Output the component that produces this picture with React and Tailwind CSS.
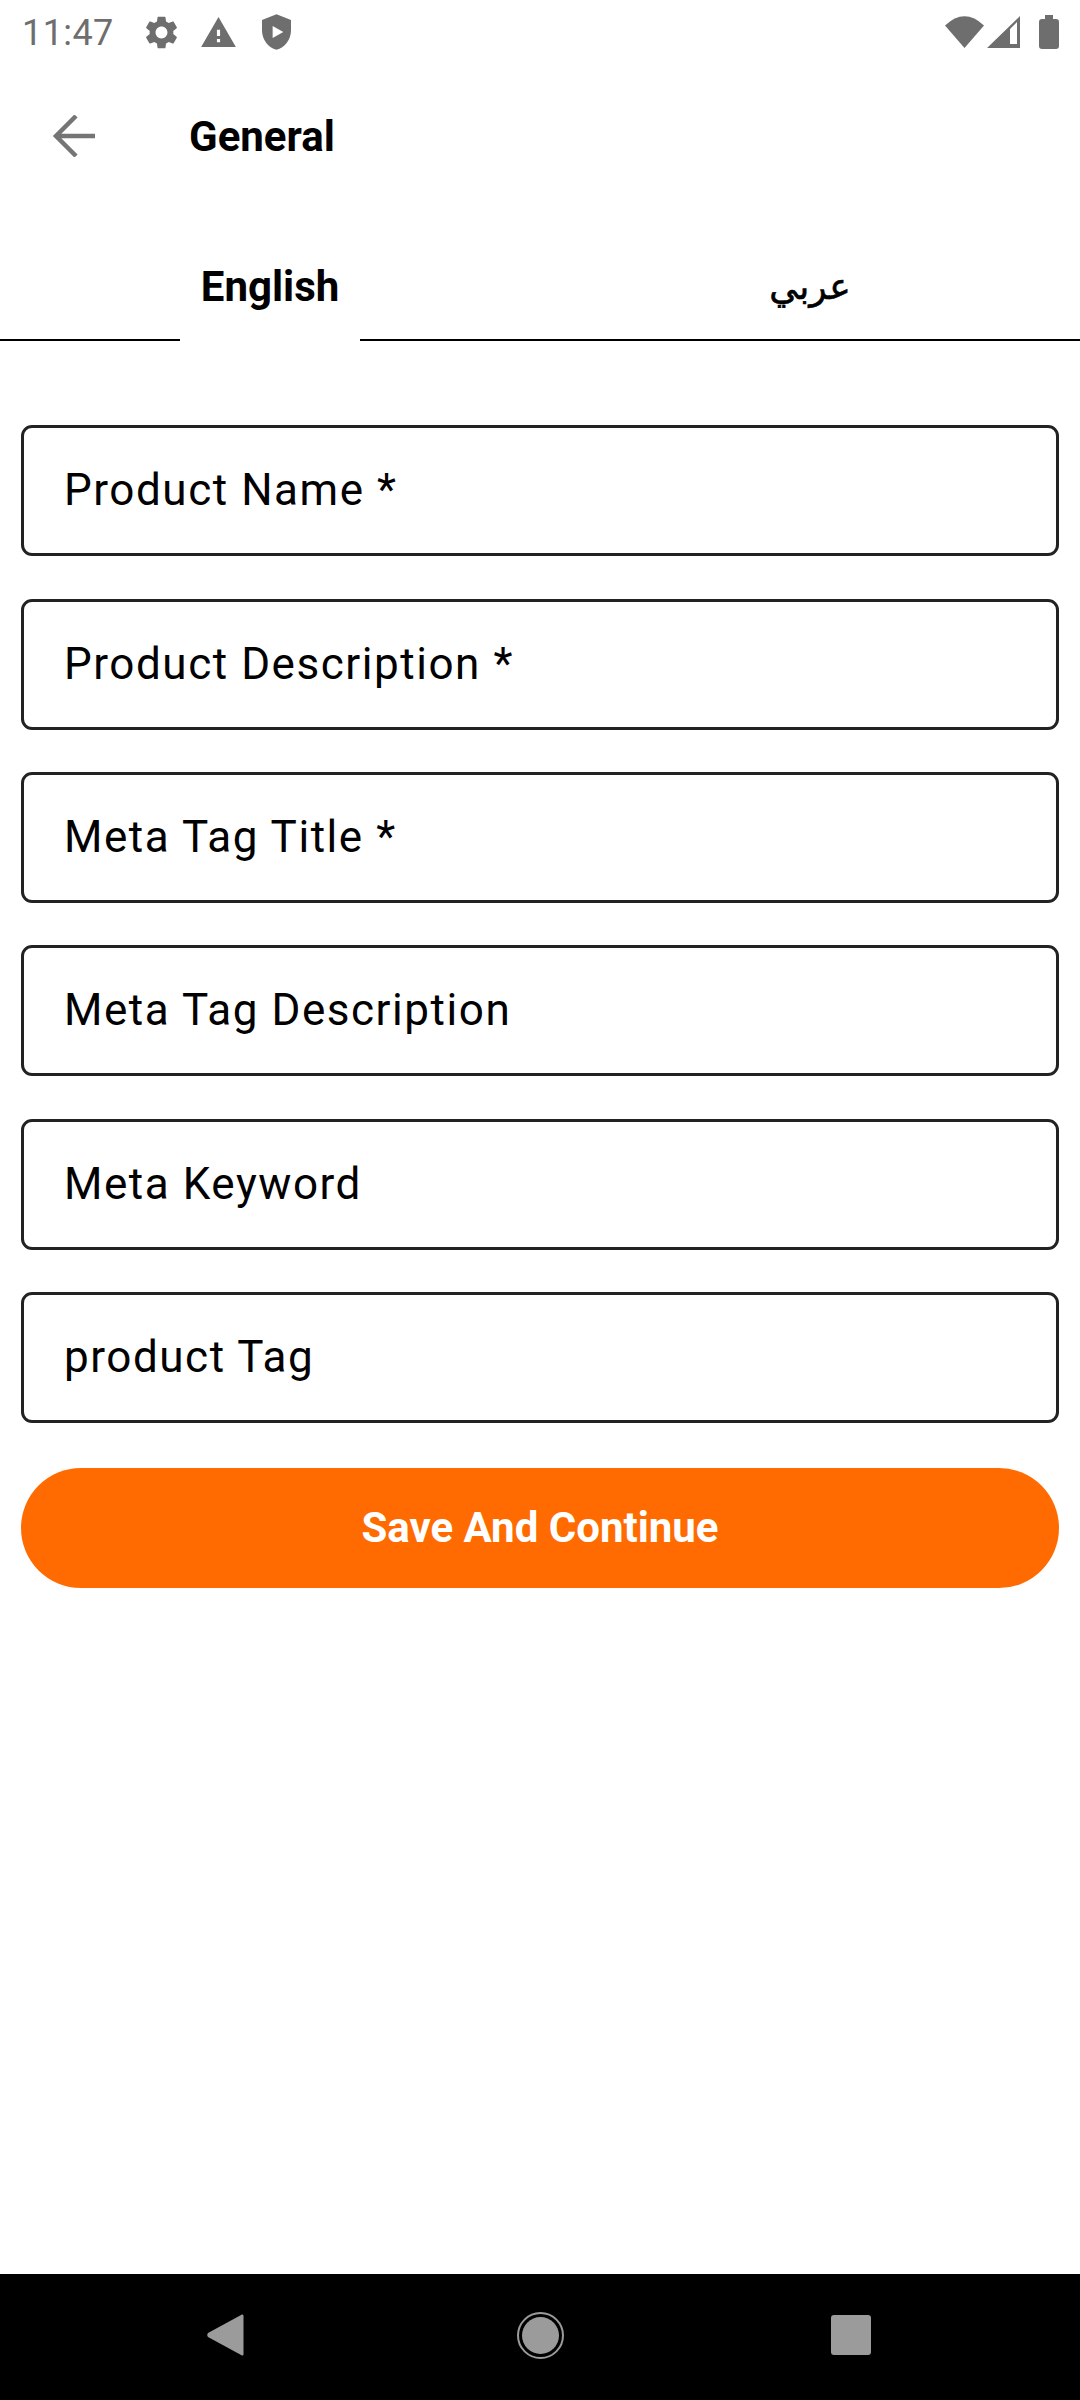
const fields = [
  "Product Name *",
  "Product Description *",
  "Meta Tag Title *",
  "Meta Tag Description",
  "Meta Keyword",
  "product Tag",
];

function StatusBar() {
  return (
    <div className="flex h-[64px] items-center justify-between pl-[22px] pr-[21px] text-[#6e6e6e]">
      <div className="flex items-center">
        <span className="w-[123px] pt-[1px] text-[36px] leading-[64px] tracking-[0.4px]">11:47</span>
        <svg viewBox="2 2 20 20" className="h-[33px] w-[33px] fill-current">
          <path d="M19.14 12.94c.04-.3.06-.61.06-.94 0-.32-.02-.64-.07-.94l2.03-1.58c.18-.14.23-.41.12-.61l-1.92-3.32c-.12-.22-.37-.29-.59-.22l-2.39.96c-.5-.38-1.03-.7-1.62-.94l-.36-2.54c-.04-.24-.24-.41-.48-.41h-3.84c-.24 0-.43.17-.47.41l-.36 2.54c-.59.24-1.13.57-1.62.94l-2.39-.96c-.22-.08-.47 0-.59.22L2.74 8.87c-.12.21-.08.47.12.61l2.03 1.58c-.05.3-.09.63-.09.94s.02.64.07.94l-2.03 1.58c-.18.14-.23.41-.12.61l1.92 3.32c.12.22.37.29.59.22l2.39-.96c.5.38 1.03.7 1.62.94l.36 2.54c.05.24.24.41.48.41h3.84c.24 0 .44-.17.47-.41l.36-2.54c.59-.24 1.13-.56 1.62-.94l2.39.96c.22.08.47 0 .59-.22l1.92-3.32c.12-.22.07-.47-.12-.61l-2.01-1.58zM12 15.6c-1.98 0-3.6-1.62-3.6-3.6s1.62-3.6 3.6-3.6 3.6 1.62 3.6 3.6-1.62 3.6-3.6 3.6z" />
        </svg>
        <svg viewBox="1 2 22 19" className="ml-[23px] h-[30px] w-[35px] fill-current">
          <path d="M1 21h22L12 2 1 21zm12-3h-2v-2h2v2zm0-4h-2v-4h2v4z" />
        </svg>
        <svg viewBox="3 1 18 22" className="ml-[26px] h-[36px] w-[29px] fill-current">
          <path fillRule="evenodd" d="M12 1 3 4.5V11c0 5.55 3.84 10.74 9 12 5.16-1.26 9-6.45 9-12V4.5L12 1zM9.6 8.2v7.6l6.6-3.8-6.6-3.8z" />
        </svg>
      </div>
      <div className="flex items-center">
        <svg viewBox="0 0 39 32" className="h-[32px] w-[39px] fill-current">
          <path d="M0 9.5Q19.5-9 39 9.5L19.5 32Z" />
        </svg>
        <svg viewBox="0 0 33 32" className="ml-[3px] h-[32px] w-[33px] fill-current">
          <path fillRule="evenodd" d="M0 32 33 0V32ZM23 13 30 6V28H23Z" />
        </svg>
        <svg viewBox="0 0 20 34" className="ml-[19px] h-[34px] w-[20px] fill-current">
          <path d="M6 0H14V4H17Q20 4 20 7V31Q20 34 17 34H3Q0 34 0 31V7Q0 4 3 4H6Z" />
        </svg>
      </div>
    </div>
  );
}

function AppBar() {
  return (
    <div className="flex h-[144px] items-center pl-[52px]">
      <svg viewBox="0 0 43 42" className="h-[42px] w-[43px] fill-none stroke-[#757575] stroke-[4.5px]">
        <path d="M43 21H3M24 1 4 21l20 20" />
      </svg>
      <span className="ml-[94px] pt-[2px] text-[42px] font-bold leading-none text-black">General</span>
    </div>
  );
}

function Tabs() {
  return (
    <div>
      <div className="flex h-[131px] items-center pt-[27px]">
        <div className="flex-1 text-center text-[42px] font-bold leading-none text-black">English</div>
        <div className="flex-1 text-center font-['DejaVu_Sans',sans-serif] text-[36px] leading-none text-black [-webkit-text-stroke:0.6px_black]" dir="rtl">عربي</div>
      </div>
      <div className="flex h-[2px]">
        <div className="w-[180px] bg-black" />
        <div className="w-[180px]" />
        <div className="flex-1 bg-black" />
      </div>
    </div>
  );
}

function Field({ label }) {
  return (
    <div className="flex h-[131px] items-center rounded-[11px] border-[3px] border-[#222222] pb-[1px] pl-[40px] text-[44px] leading-none tracking-[1.55px] text-black">
      {label}
    </div>
  );
}

function NavBar() {
  return (
    <div className="relative mt-auto h-[126px] bg-black">
      <div className="flex h-full items-center pb-[4px] pl-[207px]">
        <svg viewBox="0 0 37 42" className="h-[42px] w-[37px] fill-[#9b9b9b]">
          <path d="M35 .5Q36.5 0 36.5 2V40Q36.5 42 35 41.5L1 23Q-.5 21 1 19Z" />
        </svg>
        <div className="ml-[273px] flex h-[47px] w-[47px] items-center justify-center rounded-full border-[2px] border-[#9b9b9b]">
          <div className="h-[37px] w-[37px] rounded-full bg-[#9b9b9b]" />
        </div>
        <div className="ml-[267px] h-[40px] w-[40px] rounded-[3px] bg-[#9b9b9b]" />
      </div>
    </div>
  );
}

export default function App() {
  return (
    <div className="flex h-[2400px] w-[1080px] flex-col bg-white font-['Roboto',sans-serif]">
      <StatusBar />
      <AppBar />
      <Tabs />
      <div className="flex flex-col gap-[42.3px] px-[21px] pt-[84.4px]">
        {fields.map((f) => (
          <Field key={f} label={f} />
        ))}
      </div>
      <div className="px-[21px] pt-[45.4px]">
        <div className="flex h-[120px] items-center justify-center rounded-[60px] bg-[#ff6b00] text-[42px] font-bold leading-none text-white">
          Save And Continue
        </div>
      </div>
      <NavBar />
    </div>
  );
}
